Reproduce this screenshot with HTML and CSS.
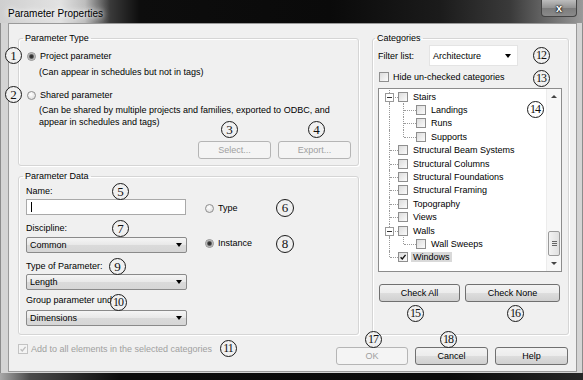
FILE: index.html
```html
<!DOCTYPE html>
<html lang="en">
<head>
    <meta charset="UTF-8">
    <title>Parameter Properties</title>
    <link rel="stylesheet" href="styles.css">
</head>
<body>

<div class="window">
    <div class="titlebar">
        <span class="title">Parameter Properties</span>
        <span class="close-btn">x</span>
    </div>

    <div class="frame">
        <div class="client">
            <div class="top-row">
                <div class="left-col">
                    <fieldset class="group type-group">
                        <legend>Parameter Type</legend>
                        <div class="radio-row first"><span class="radio checked"></span>Project parameter</div>
                        <div class="hint">(Can appear in schedules but not in tags)</div>
                        <div class="radio-row second"><span class="radio"></span>Shared parameter</div>
                        <div class="hint two-lines">(Can be shared by multiple projects and families, exported to ODBC, and<br>appear in schedules and tags)</div>
                        <div class="button-row">
                            <button class="btn" disabled>Select...</button>
                            <button class="btn" disabled>Export...</button>
                        </div>
                    </fieldset>

                    <fieldset class="group data-group">
                        <legend>Parameter Data</legend>
                        <div class="data-body">
                            <div class="fields">
                                <div class="field-label first">Name:</div>
                                <div class="text-input"><span class="caret"></span></div>
                                <div class="field-label">Discipline:</div>
                                <div class="combo discipline">Common<span class="arrow"></span></div>
                                <div class="field-label">Type of Parameter:</div>
                                <div class="combo type-of">Length<span class="arrow"></span></div>
                                <div class="field-label group-label">Group parameter und</div>
                                <div class="combo group-under">Dimensions<span class="arrow"></span></div>
                            </div>
                            <div class="kind">
                                <div class="radio-row"><span class="radio"></span>Type</div>
                                <div class="radio-row instance"><span class="radio checked"></span>Instance</div>
                            </div>
                        </div>
                    </fieldset>
                </div>

                <fieldset class="group cat-group">
                    <legend>Categories</legend>
                    <div class="filter-row">
                        <span class="filter-label">Filter list:</span>
                        <div class="filter-select">Architecture<span class="arrow"></span></div>
                    </div>
                    <div class="hide-row"><span class="check"></span>Hide un-checked categories</div>

                    <div class="tree">
                        <div class="tree-items">
                            <div class="tree-row"><span class="branch tee"><span class="toggle"></span></span><span class="check"></span><span class="node">Stairs</span></div>
                            <div class="tree-row"><span class="branch pass"></span><span class="branch sub tee"></span><span class="check"></span><span class="node">Landings</span></div>
                            <div class="tree-row"><span class="branch pass"></span><span class="branch sub tee"></span><span class="check"></span><span class="node">Runs</span></div>
                            <div class="tree-row"><span class="branch pass"></span><span class="branch sub tee end"></span><span class="check"></span><span class="node">Supports</span></div>
                            <div class="tree-row"><span class="branch tee"></span><span class="check"></span><span class="node">Structural Beam Systems</span></div>
                            <div class="tree-row"><span class="branch tee"></span><span class="check"></span><span class="node">Structural Columns</span></div>
                            <div class="tree-row"><span class="branch tee"></span><span class="check"></span><span class="node">Structural Foundations</span></div>
                            <div class="tree-row"><span class="branch tee"></span><span class="check"></span><span class="node">Structural Framing</span></div>
                            <div class="tree-row"><span class="branch tee"></span><span class="check"></span><span class="node">Topography</span></div>
                            <div class="tree-row"><span class="branch tee"></span><span class="check"></span><span class="node">Views</span></div>
                            <div class="tree-row"><span class="branch tee"><span class="toggle"></span></span><span class="check"></span><span class="node">Walls</span></div>
                            <div class="tree-row"><span class="branch pass"></span><span class="branch sub tee end"></span><span class="check"></span><span class="node">Wall Sweeps</span></div>
                            <div class="tree-row"><span class="branch tee end"></span><span class="check checked"><svg viewBox="0 0 10 10"><path d="M2 5.2 L4.1 7.4 L8.2 2.4"/></svg></span><span class="node selected">Windows</span></div>
                        </div>
                        <div class="scrollbar">
                            <div class="sb-arrow"><span class="tri-up"></span></div>
                            <div class="sb-thumb"><span class="grip"></span></div>
                            <div class="sb-arrow bottom"><span class="tri-down"></span></div>
                        </div>
                    </div>

                    <div class="check-buttons">
                        <button class="btn check-all">Check All</button>
                        <button class="btn check-none">Check None</button>
                    </div>
                </fieldset>
            </div>

            <div class="bottom-row">
                <div class="add-all"><span class="check checked disabled"><svg viewBox="0 0 10 10"><path d="M2 5.2 L4.1 7.4 L8.2 2.4"/></svg></span>Add to all elements in the selected categories</div>
                <div class="dialog-buttons">
                    <button class="btn ok" disabled>OK</button>
                    <button class="btn">Cancel</button>
                    <button class="btn">Help</button>
                </div>
            </div>
        </div>
    </div>
    <div class="bottom-edge"></div>

    <!-- callout numbers -->
    <span class="marker m1">1</span>
    <span class="marker m2">2</span>
    <span class="marker m3">3</span>
    <span class="marker m4">4</span>
    <span class="marker m5">5</span>
    <span class="marker m6">6</span>
    <span class="marker m7">7</span>
    <span class="marker m8">8</span>
    <span class="marker m9">9</span>
    <span class="marker two m10">10</span>
    <span class="marker two m11">11</span>
    <span class="marker two m12">12</span>
    <span class="marker two m13">13</span>
    <span class="marker two m14">14</span>
    <span class="marker two m15">15</span>
    <span class="marker two m16">16</span>
    <span class="marker two m17">17</span>
    <span class="marker two m18">18</span>
</div>

</body>
</html>
```
FILE: styles.css
```css
* {
    box-sizing: border-box;
}
body {
    margin: 0;
    background: #111;
    font-family: "Liberation Sans", Arial, sans-serif;
    font-size: 9px;
    color: #000;
}
.window {
    position: relative;
    width: 583px;
    height: 380px;
    overflow: hidden;
}

/* title bar */
.titlebar {
    height: 23px;
    display: flex;
    justify-content: space-between;
    align-items: flex-start;
    background: linear-gradient(90deg, #cfcfcf 0, #e2e2e2 60px, #bdbdbd 85px, #3a3a3a 110px, #0d0d0d 140px, #0a0a0a 330px, #1b1b1b 440px, #3a3a3a 510px, #6d6d6d 550px, #9a9a9a 583px);
}
.title {
    padding-left: 8px;
    line-height: 28px;
    font-size: 10px;
    text-shadow: 0 0 5px #fff, 0 0 8px #fff;
}
.close-btn {
    width: 36px;
    height: 17px;
    margin-right: 6px;
    border: 1px solid #444;
    border-top: none;
    border-radius: 0 0 4px 4px;
    background: linear-gradient(#bdbdbd, #929292 50%, #7c7c7c 51%, #8a8a8a);
    color: #fff;
    font: bold 11px "Liberation Sans", Arial, sans-serif;
    display: flex;
    align-items: center;
    justify-content: center;
    text-shadow: 0 0 2px #000, 0 0 2px #000;
}

.frame {
    display: flex;
    padding: 0 6px 1px 8px;
    background: #d4d4d4;
    box-shadow: inset 1px 0 #8c8c8c, inset -1px 0 #8c8c8c;
}
.client {
    width: 569px;
    height: 349px;
    border: 1px solid #9a9a9a;
    background: #f0f0f0;
    padding: 9px 7px 0 9px;
}
.bottom-edge {
    height: 7px;
    background: linear-gradient(90deg, #a8a8a8 0, #4a4a4a 30px, #0b0b0b 120px, #0a0a0a 450px, #262626 583px);
}

/* group boxes */
.top-row {
    display: flex;
    gap: 13px;
}
.left-col {
    width: 341px;
    display: flex;
    flex-direction: column;
    gap: 5px;
}
.group {
    margin: 0;
    padding: 0;
    min-width: 0;
    border: 1px solid #d5d5d5;
    border-radius: 3px;
    box-shadow: inset 1px 1px #fff, 1px 1px #fff;
}
.group legend {
    margin-left: 4px;
    padding: 0 2px;
    line-height: 11px;
}
.type-group {
    height: 133px;
}
.data-group {
    height: 164px;
}
.cat-group {
    width: 197px;
    height: 302px;
}
.cat-group legend {
    margin-left: 2px;
}

/* radios and checkboxes */
.radio-row {
    display: flex;
    align-items: center;
    height: 14px;
    white-space: nowrap;
}
.radio {
    flex: none;
    width: 9px;
    height: 9px;
    margin-right: 4px;
    border: 1px solid #8e8e8e;
    border-radius: 50%;
    background: radial-gradient(circle at 40% 35%, #fff, #d6d6d6);
}
.radio.checked {
    background: radial-gradient(circle, #2a2a2a 0, #3c3c3c 1.6px, #9a9a9a 2.6px, #e8e8e8 3.6px);
}
.check {
    flex: none;
    width: 10px;
    height: 10px;
    border: 1px solid #8f8f8f;
    background: linear-gradient(135deg, #dcdcdc, #fbfbfb);
    display: flex;
    align-items: center;
    justify-content: center;
}
.check svg {
    width: 10px;
    height: 10px;
}
.check path {
    fill: none;
    stroke: #111;
    stroke-width: 1.7;
}
.check.disabled {
    border-color: #c3c3c3;
    background: #f4f4f4;
}
.check.disabled path {
    stroke: #bdbdbd;
}

/* Parameter Type */
.type-group .radio-row {
    padding-left: 8px;
}
.type-group .first {
    margin-top: 5px;
}
.type-group .second {
    margin-top: 10px;
}
.hint {
    margin-left: 20px;
    margin-top: 3px;
    line-height: 12px;
    white-space: nowrap;
}
.hint.two-lines {
    margin-top: 2px;
}
.button-row {
    display: flex;
    justify-content: flex-end;
    gap: 7px;
    margin-top: 13px;
    padding-right: 7px;
}

/* buttons */
.btn {
    width: 73px;
    height: 18px;
    padding: 0;
    border: 1px solid #707070;
    border-radius: 3px;
    background: linear-gradient(#f3f3f3 0, #ececec 50%, #dddddd 51%, #d0d0d0 100%);
    font: 9px "Liberation Sans", Arial, sans-serif;
    color: #000;
}
.btn:disabled {
    border-color: #b5b5b5;
    background: #f4f4f4;
    color: #a0a0a0;
}

/* Parameter Data */
.data-body {
    display: flex;
    padding-left: 7px;
}
.fields {
    width: 161px;
}
.field-label {
    margin-top: 7px;
    line-height: 12px;
    white-space: nowrap;
}
.field-label.first {
    margin-top: 3px;
}
.field-label.group-label {
    margin-top: 4px;
}
.text-input {
    width: 160px;
    height: 16px;
    margin-top: 2px;
    border: 1px solid #a9a9a9;
    background: #fff;
    display: flex;
    align-items: center;
    padding-left: 4px;
}
.caret {
    width: 1px;
    height: 10px;
    background: #000;
}
.combo {
    height: 16px;
    border: 1px solid #8a8a8a;
    border-radius: 2px;
    background: linear-gradient(#f5f5f5, #e8e8e8 50%, #dadada 51%, #d6d6d6);
    display: flex;
    align-items: center;
    justify-content: space-between;
    padding: 0 4px 0 3px;
}
.combo.discipline {
    margin-top: 3px;
}
.combo.type-of {
    margin-top: 2px;
}
.combo.group-under {
    margin-top: 4px;
}
.arrow {
    width: 0;
    height: 0;
    border-left: 3.5px solid transparent;
    border-right: 3.5px solid transparent;
    border-top: 4px solid #000;
}
.kind {
    margin-left: 18px;
    padding-top: 19px;
}
.kind .instance {
    margin-top: 21px;
}

/* Categories */
.filter-row {
    display: flex;
    align-items: center;
    height: 21px;
    margin: 1px 0 0 5px;
}
.filter-label {
    width: 51px;
}
.filter-select {
    width: 89px;
    height: 21px;
    border: 1px solid #e4e4e4;
    background: #fff;
    display: flex;
    align-items: center;
    justify-content: space-between;
    padding: 0 6px 0 3px;
}
.hide-row {
    display: flex;
    align-items: center;
    gap: 4px;
    height: 11px;
    margin: 5px 0 0 6px;
}
.tree {
    width: 184px;
    height: 184px;
    margin: 6px 0 0 5px;
    border: 1px solid #8c8c8c;
    background: #fff;
    display: flex;
}
.tree-items {
    flex: 1;
    padding: 1px 0 0 3px;
    overflow: hidden;
}
.tree-row {
    display: flex;
    align-items: center;
    height: 13.4px;
    white-space: nowrap;
}
.branch {
    position: relative;
    flex: none;
    align-self: stretch;
    width: 16px;
}
.branch.pass {
    width: 14px;
}
.branch.sub {
    width: 20px;
}
.branch::before {
    content: '';
    position: absolute;
    left: 7px;
    top: 0;
    bottom: 0;
    border-left: 1px dotted #9a9a9a;
}
.branch.end::before {
    bottom: 50%;
}
.branch.tee::after {
    content: '';
    position: absolute;
    left: 8px;
    right: 0;
    top: 50%;
    border-top: 1px dotted #9a9a9a;
}
.toggle {
    position: absolute;
    z-index: 1;
    left: 3px;
    top: calc(50% - 4px);
    width: 9px;
    height: 9px;
    border: 1px solid #9a9a9a;
    background: #fff;
}
.toggle::after {
    content: '';
    position: absolute;
    left: 1px;
    right: 1px;
    top: 3px;
    border-top: 1px solid #333;
}
.node {
    margin-left: 5px;
}
.node.selected {
    margin-left: 3px;
    padding: 0 2px;
    background: #d9d9d9;
}
.scrollbar {
    width: 15px;
    display: flex;
    flex-direction: column;
    align-items: center;
    background: #f7f7f7;
    border-left: 1px solid #ececec;
}
.sb-arrow {
    width: 100%;
    height: 15px;
    display: flex;
    align-items: center;
    justify-content: center;
}
.sb-arrow.bottom {
    margin-top: auto;
}
.tri-up {
    border-left: 3px solid transparent;
    border-right: 3px solid transparent;
    border-bottom: 3px solid #444;
}
.tri-down {
    border-left: 3px solid transparent;
    border-right: 3px solid transparent;
    border-top: 3px solid #444;
}
.sb-thumb {
    width: 12px;
    height: 26px;
    margin-top: 127px;
    border: 1px solid #9a9a9a;
    border-radius: 2px;
    background: linear-gradient(90deg, #f3f3f3, #e0e0e0);
    display: flex;
    align-items: center;
    justify-content: center;
}
.grip {
    width: 5px;
    height: 5px;
    background: repeating-linear-gradient(#666 0 1px, transparent 1px 2px);
}
.check-buttons {
    display: flex;
    gap: 5px;
    margin: 12px 0 0 6px;
}
.check-all {
    width: 81px;
}
.check-none {
    width: 95px;
}

/* bottom row */
.bottom-row {
    display: flex;
    justify-content: space-between;
    align-items: flex-start;
    margin-top: 9px;
    padding-right: 1px;
}
.add-all {
    display: flex;
    align-items: center;
    gap: 3px;
    height: 10px;
    color: #a0a0a0;
    white-space: nowrap;
}
.dialog-buttons {
    display: flex;
    gap: 7px;
    margin-top: 3px;
}
.dialog-buttons .ok {
    width: 72px;
}

/* callout numbers drawn over the dialog */
.marker {
    position: absolute;
    width: 17px;
    height: 17px;
    border: 1px solid #1a1a1a;
    border-radius: 50%;
    background: #f0f0f0;
    color: #111;
    font: 13px/15px "Liberation Serif", "Times New Roman", serif;
    text-align: center;
}
.marker.two {
    font-size: 12px;
    letter-spacing: -1px;
    text-indent: -1px;
}
.m1 { left: 5px; top: 47px; }
.m2 { left: 5px; top: 86px; }
.m3 { left: 221px; top: 121px; }
.m4 { left: 308px; top: 121px; }
.m5 { left: 112px; top: 183px; }
.m6 { left: 276px; top: 199px; width: 18px; height: 18px; }
.m7 { left: 112px; top: 220px; }
.m8 { left: 276px; top: 235px; width: 18px; height: 18px; }
.m9 { left: 109px; top: 258px; }
.m10 { left: 110px; top: 294px; }
.m11 { left: 220px; top: 340px; }
.m12 { left: 533px; top: 47px; }
.m13 { left: 533px; top: 70px; }
.m14 { left: 527px; top: 101px; background: #fff; }
.m15 { left: 407px; top: 305px; }
.m16 { left: 507px; top: 305px; }
.m17 { left: 365px; top: 331px; }
.m18 { left: 440px; top: 331px; }
```
